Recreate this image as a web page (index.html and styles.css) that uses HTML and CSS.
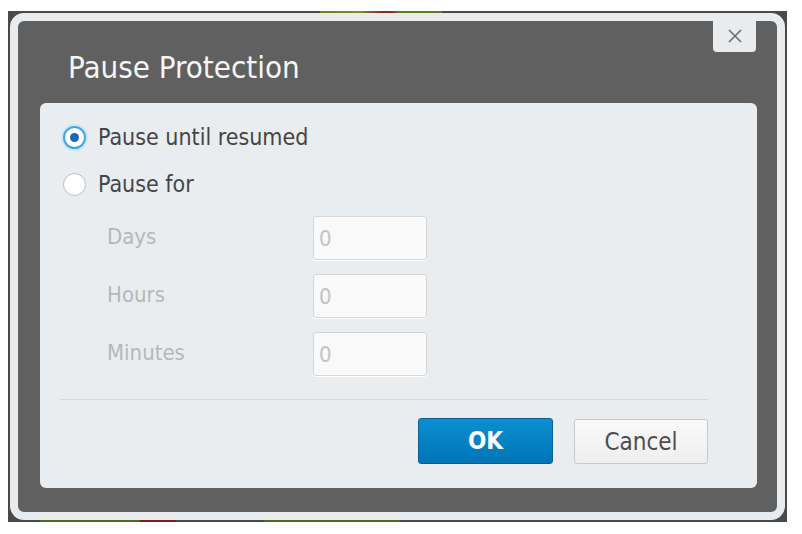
FILE: index.html
```html
<!DOCTYPE html>
<html>
<head>
<meta charset="utf-8">
<link rel="stylesheet" href="styles.css">
</head>
<body>
<div class="backdrop">
  <div class="dialog">
    <div class="header">
      <h1 class="title">Pause Protection</h1>
      <button class="close" aria-label="Close">
        <svg width="16" height="16" viewBox="0 0 16 16"><path d="M2 2 L14 14 M14 2 L2 14" stroke="#6b6b6b" stroke-width="1.6" fill="none"/></svg>
      </button>
    </div>
    <div class="panel">
      <label class="radio-row">
        <span class="radio checked"><span class="dot"></span></span>
        <span class="radio-text">Pause until resumed</span>
      </label>
      <label class="radio-row second">
        <span class="radio"></span>
        <span class="radio-text">Pause for</span>
      </label>
      <div class="fields">
        <span class="field-label">Days</span>
        <span class="input">0</span>
        <span class="field-label">Hours</span>
        <span class="input">0</span>
        <span class="field-label">Minutes</span>
        <span class="input">0</span>
      </div>
      <div class="footer">
        <button class="btn ok">OK</button>
        <button class="btn cancel">Cancel</button>
      </div>
    </div>
  </div>
</div>
</body>
</html>
```
FILE: styles.css
```css
html, body {
  margin: 0;
  padding: 0;
  background: #ffffff;
  width: 802px;
  height: 534px;
  overflow: hidden;
}
body {
  font-family: "DejaVu Sans Condensed", "DejaVu Sans", sans-serif;
  font-stretch: condensed;
}
.backdrop {
  margin: 11px 0 0 8px;
  width: 779px;
  height: 511px;
  background-color: #4a4a4a;
  background-image:
    linear-gradient(90deg, #6f7d2c 0, #7d8a30 40px, #8a2a22 62px, #8a2a22 72px, #5f7a26 78px, #5f7a26 122px),
    linear-gradient(90deg, #4f6a22 0, #4f6a22 100px, #7a1e1e 100px, #7a1e1e 136px, transparent 136px, transparent 224px, #4f6a22 224px, #4f6a22 360px);
  background-size: 122px 2px, 360px 2px;
  background-position: 312px 0, 32px 509px;
  background-repeat: no-repeat;
  padding: 2px 0 0 2px;
  box-sizing: border-box;
}
.dialog {
  width: 775px;
  height: 507px;
  box-sizing: border-box;
  border: 8px solid #e8ecef;
  border-radius: 14px;
  background: #606060;
  display: flex;
  flex-direction: column;
}
.header {
  position: relative;
  height: 82px;
  flex: none;
}
.title {
  margin: 0;
  padding: 29px 0 0 50px;
  font-size: 31px;
  font-weight: normal;
  color: #f6f6f6;
  line-height: 34px;
}
.close {
  position: absolute;
  top: -1px;
  right: 21px;
  width: 43px;
  height: 32px;
  border: none;
  background: #e8ecef;
  border-radius: 0 0 4px 4px;
  padding: 0;
  display: flex;
  align-items: center;
  justify-content: center;
}
.panel {
  margin: 0 20px 24px 22px;
  flex: 1;
  background: #e9edf0;
  border-radius: 6px;
  padding: 17px 0 0 0;
  display: flex;
  flex-direction: column;
}
.radio-row {
  display: flex;
  align-items: center;
  height: 34px;
  padding-left: 23px;
}
.radio-row.second {
  margin-top: 13px;
}
.radio {
  width: 23px;
  height: 23px;
  border-radius: 50%;
  border: 1px solid #bdbdbd;
  background: #ffffff;
  box-sizing: border-box;
  display: flex;
  align-items: center;
  justify-content: center;
  flex: none;
}
.radio.checked {
  border: 2px solid #44a6de;
  box-shadow: 0 0 0 2px #cde6f5;
}
.dot {
  width: 9px;
  height: 9px;
  border-radius: 50%;
  background: #1a67b5;
}
.radio-text {
  margin-left: 12px;
  font-size: 23px;
  color: #454545;
}
.fields {
  margin-top: 15px;
  margin-left: 67px;
  display: grid;
  grid-template-columns: 206px 114px;
  row-gap: 14px;
  align-items: center;
}
.field-label {
  font-size: 22px;
  color: #b7b7b7;
  position: relative;
  top: -2px;
}
.input {
  height: 44px;
  box-sizing: border-box;
  background: #f9f9f9;
  border: 1px solid #d6d6d6;
  border-radius: 3px;
  padding: 0 0 0 5px;
  line-height: 44px;
  font-size: 22px;
  color: #c3c3c3;
  box-shadow: 0 1px 0 #ffffff;
}
.footer {
  margin: 23px 49px 0 20px;
  border-top: 1px solid #d5d9dd;
  padding-top: 18px;
  display: flex;
  justify-content: flex-end;
  gap: 21px;
}
.btn {
  font-family: "DejaVu Sans Condensed", "DejaVu Sans", sans-serif;
  font-stretch: condensed;
  height: 46px;
  font-size: 24px;
  border-radius: 3px;
  padding: 0;
}
.ok {
  width: 135px;
  background: linear-gradient(#0a8fd0, #0075b8);
  border: 1px solid #0a5f94;
  color: #ffffff;
  font-weight: bold;
}
.cancel {
  width: 134px;
  height: 45px;
  margin-top: 1px;
  background: linear-gradient(#fafafa, #eeeeee);
  border: 1px solid #c8c8c8;
  color: #4d4d4d;
}
```
